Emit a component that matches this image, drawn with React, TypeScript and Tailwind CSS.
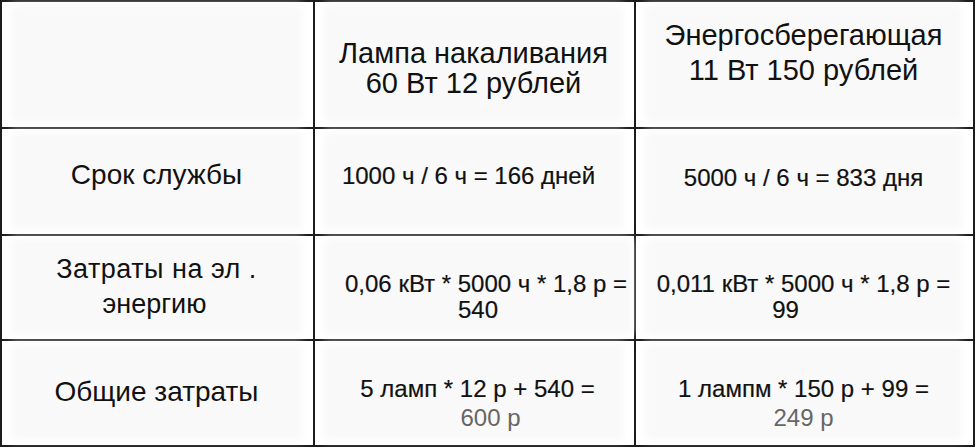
import React from 'react'

const font = { fontFamily: '"Liberation Sans", Arial, sans-serif' }

interface CellProps {
  children: React.ReactNode
  className?: string
}

function Cell({ children, className = '' }: CellProps) {
  return (
    <div className="flex border-r-2 border-b-2 border-[#1c1c1c] bg-white">
      <div
        className={`m-[8px_16px_10px_14px] flex flex-1 flex-col items-center justify-center bg-[#f9f9f9] text-center text-[#111] shadow-[0_0_8px_5px_#f9f9f9] ${className}`}
      >
        {children}
      </div>
    </div>
  )
}

function Num({ children, className = '' }: { children: React.ReactNode; className?: string }) {
  return (
    <span className={`block whitespace-nowrap text-[24px] [-webkit-text-stroke:0.2px_#111] ${className}`}>
      {children}
    </span>
  )
}

export default function App() {
  return (
    <div className="h-[448px] w-[976px] bg-white" style={font}>
      <div className="grid w-[975px] grid-cols-[313px_321px_339px] grid-rows-[127px_107px_105px_106px] border-t-2 border-l-2 border-[#1c1c1c]">
        {/* header */}
        <Cell>{null}</Cell>
        <Cell className="pt-[8px] text-[29px] leading-[30px]">
          <span className="block whitespace-nowrap">Лампа накаливания</span>
          <span className="block whitespace-nowrap">60 Вт 12 рублей</span>
        </Cell>
        <Cell className="pb-[22px] text-[29px] leading-[35px]">
          <span className="block whitespace-nowrap">Энергосберегающая</span>
          <span className="block whitespace-nowrap">11 Вт 150 рублей</span>
        </Cell>

        {/* срок службы */}
        <Cell className="pb-[12px] text-[28px]">Срок службы</Cell>
        <Cell className="pb-[10px]">
          <Num className="pr-[10px]">1000 ч / 6 ч = 166 дней</Num>
        </Cell>
        <Cell className="pb-[6px]">
          <Num>5000 ч / 6 ч = 833 дня</Num>
        </Cell>

        {/* затраты на энергию */}
        <Cell className="text-[27px] leading-[35px]">
          <span className="block whitespace-nowrap tracking-[0.5px]">Затраты на эл .</span>
          <span className="block whitespace-nowrap pr-[4px]">энергию</span>
        </Cell>
        <Cell className="pt-[20px] leading-[26px]">
          <Num className="pl-[16px]">0,06 кВт * 5000 ч * 1,8 р =</Num>
          <Num>540</Num>
        </Cell>
        <Cell className="pt-[20px] leading-[26px]">
          <Num>0,011 кВт * 5000 ч * 1,8 р =</Num>
          <Num className="pr-[36px]">99</Num>
        </Cell>

        {/* общие затраты */}
        <Cell className="text-[28px]">Общие затраты</Cell>
        <Cell className="pt-[22px] leading-[29px]">
          <Num className="pl-[8px]">5 ламп * 12 р + 540 =</Num>
          <Num className="pl-[34px] text-[#666] [-webkit-text-stroke:0px]">600 р</Num>
        </Cell>
        <Cell className="pt-[22px] leading-[29px]">
          <Num>1 лампм * 150 р + 99 =</Num>
          <Num className="text-[#666] [-webkit-text-stroke:0px]">249 р</Num>
        </Cell>
      </div>
    </div>
  )
}
